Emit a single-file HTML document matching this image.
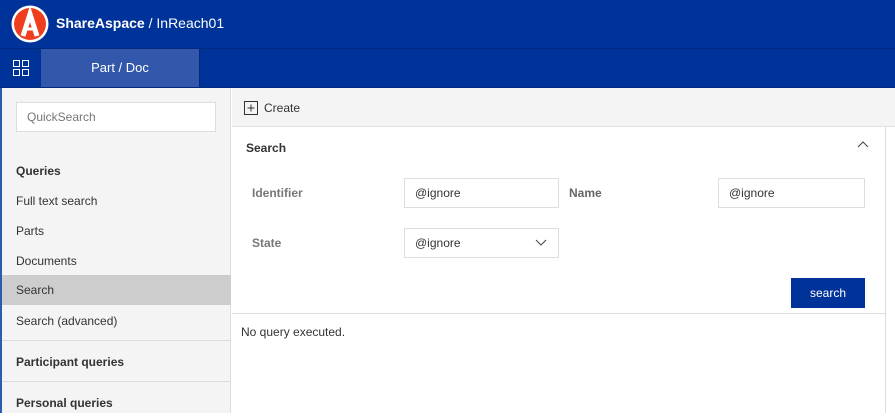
<!DOCTYPE html>
<html><head><style>
*{box-sizing:border-box;margin:0;padding:0}
body{width:895px;height:413px;overflow:hidden;font-family:"Liberation Sans",sans-serif;font-size:12px;color:#333;background:#fff;position:relative}
.abs{position:absolute}
.hdr{left:0;top:0;width:895px;height:48px;background:#003399}
.nav{left:0;top:48px;width:895px;height:40px;background:#003399;border-top:1px solid #002a80;border-bottom:1px solid #002a80}
.tab{left:41px;top:49px;width:159px;height:38px;background:#3358ab;color:#fff;font-size:13px;text-align:center;line-height:38px;border-right:1px solid #002a80}
.side{left:0;top:88px;width:231px;height:325px;background:#f4f4f4;border-right:1px solid #ddd;border-left:2px solid #2a5db0}
.qs{left:16px;top:102px;width:200px;height:30px;background:#fff;border:1px solid #ddd;color:#777;padding-left:10px;line-height:28px}
.item{left:2px;width:229px;height:30px;line-height:30px;padding-left:14px;color:#333}
.bold{font-weight:bold;color:#333}
.tool{left:232px;top:88px;width:663px;height:39px;background:#f4f4f4;border-bottom:1px solid #e0e0e0}
.lbl{font-weight:bold;color:#777}
.inp{height:30px;border:1px solid #ddd;background:#fff;line-height:28px;padding-left:10px;color:#333}
</style></head><body>
<div class="abs hdr"></div>
<svg class="abs" style="left:11px;top:5px" width="38" height="38" viewBox="0 0 38 38"><circle cx="19" cy="19" r="18.5" fill="#fff"/><circle cx="19" cy="19" r="16" fill="#ef3e1f"/><path d="M12 31 L19 9 L26 31" fill="none" stroke="#fff" stroke-width="5"/><path d="M14 24 H24" stroke="#fff" stroke-width="3"/></svg>
<div class="abs" style="left:56px;top:15px;color:#fff;font-size:14px"><b>ShareAspace</b> / InReach01</div>
<div class="abs nav"></div>
<svg class="abs" style="left:13px;top:60px" width="16" height="16" viewBox="0 0 16 16" fill="none" stroke="#fff" stroke-width="1"><rect x="0.5" y="0.5" width="6" height="6"/><rect x="9.5" y="0.5" width="6" height="6"/><rect x="0.5" y="9.5" width="6" height="6"/><rect x="9.5" y="9.5" width="6" height="6"/></svg>
<div class="abs tab">Part / Doc</div>
<div class="abs side"></div>
<div class="abs qs">QuickSearch</div>
<div class="abs item bold" style="top:156px">Queries</div>
<div class="abs item" style="top:186px">Full text search</div>
<div class="abs item" style="top:216px">Parts</div>
<div class="abs item" style="top:246px">Documents</div>
<div class="abs item" style="top:275px;background:#cdcdcd">Search</div>
<div class="abs item" style="top:306px">Search (advanced)</div>
<div class="abs" style="left:2px;top:340px;width:229px;height:1px;background:#ddd"></div>
<div class="abs item bold" style="top:347px">Participant queries</div>
<div class="abs" style="left:2px;top:381px;width:229px;height:1px;background:#ddd"></div>
<div class="abs item bold" style="top:388px">Personal queries</div>
<div class="abs tool"></div>
<svg class="abs" style="left:244px;top:101px" width="14" height="14" viewBox="0 0 14 14" fill="none" stroke="#333"><rect x="0.5" y="0.5" width="13" height="13"/><path d="M7 3.5V10.5M3.5 7H10.5"/></svg>
<div class="abs" style="left:264px;top:101px;font-size:12px">Create</div>
<div class="abs" style="left:885px;top:127px;width:1px;height:286px;background:#ddd"></div>
<div class="abs bold" style="left:246px;top:141px">Search</div>
<svg class="abs" style="left:857px;top:141px" width="12" height="8" viewBox="0 0 12 8"><path d="M1 6L6 1L11 6" fill="none" stroke="#444"/></svg>
<div class="abs lbl" style="left:252px;top:186px">Identifier</div>
<div class="abs inp" style="left:404px;top:178px;width:155px">@ignore</div>
<div class="abs lbl" style="left:569px;top:186px;color:#666">Name</div>
<div class="abs inp" style="left:718px;top:178px;width:147px">@ignore</div>
<div class="abs lbl" style="left:252px;top:236px">State</div>
<div class="abs inp" style="left:404px;top:228px;width:155px">@ignore</div>
<svg class="abs" style="left:535px;top:239px" width="12" height="8" viewBox="0 0 12 8"><path d="M1 1L6 6L11 1" fill="none" stroke="#444"/></svg>
<div class="abs" style="left:791px;top:278px;width:74px;height:30px;background:#003399;color:#fff;text-align:center;line-height:30px">search</div>
<div class="abs" style="left:232px;top:313px;width:653px;height:1px;background:#ddd"></div>
<div class="abs" style="left:241px;top:325px">No query executed.</div>
</body></html>
